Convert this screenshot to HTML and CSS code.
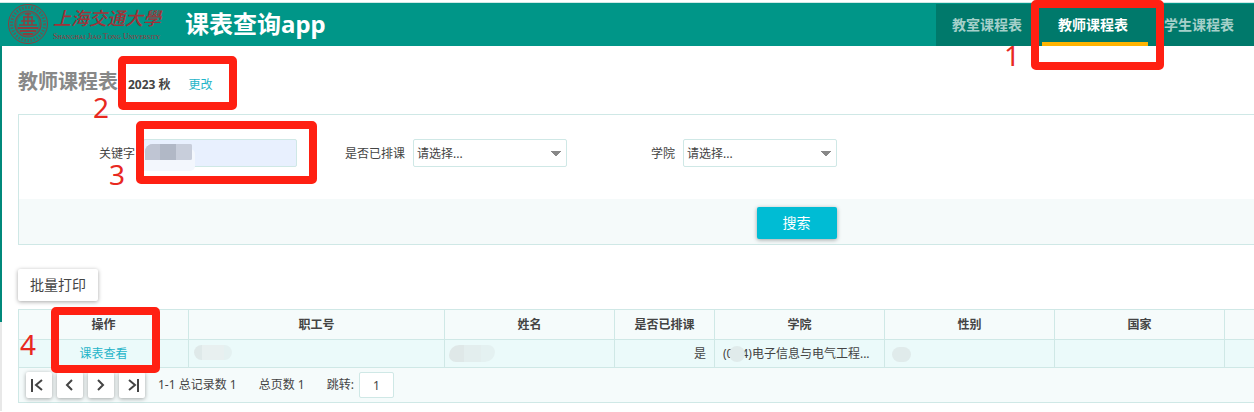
FILE: index.html
```html
<!DOCTYPE html>
<html lang="zh-CN">
<head>
    <meta charset="UTF-8">
    <meta name="viewport" content="width=device-width, initial-scale=1.0">
    <title>课表查询app</title>
    <link rel="stylesheet" href="styles.css">
</head>
<body>
    <header class="header">
        <svg class="emblem" viewBox="0 0 42 42" fill="none" stroke="#8c3f3e">
            <circle cx="21" cy="21" r="19.5" stroke-width="1"/>
            <circle cx="21" cy="21" r="16.5" stroke-width="3" stroke-dasharray="1.5 1.6" opacity=".7"/>
            <circle cx="21" cy="21" r="13" stroke-width="1.2"/>
            <circle cx="21" cy="21" r="11.5" stroke-width=".6"/>
            <path d="M16 14h10M18 11h6M14 18h14M12 22h18M21 10v12M17 14v8M25 14v8" stroke-width="1.5"/>
            <path d="M11 25h20M13 28h16M16 31h10" stroke-width="1.8"/>
        </svg>
        <div class="school">
            <span class="school-cn">上海交通大學</span>
            <span class="school-en">Shanghai Jiao Tong University</span>
        </div>
        <h1>课表查询app</h1>
        <nav>
            <a href="#">教室课程表</a>
            <a href="#" class="active">教师课程表</a>
            <a href="#">学生课程表</a>
        </nav>
    </header>

    <main class="content">
        <div class="title-row">
            <h2>教师课程表</h2>
            <span class="term">2023 秋</span>
            <a href="#">更改</a>
        </div>

        <form class="search">
            <div class="fields">
                <div class="field">
                    <label for="keyword">关键字</label>
                    <div class="input-wrap">
                        <input type="text" id="keyword">
                        <span class="mask mask-keyword"></span>
                    </div>
                </div>
                <div class="field">
                    <label for="arranged">是否已排课</label>
                    <select id="arranged"><option>请选择...</option></select>
                </div>
                <div class="field">
                    <label for="college">学院</label>
                    <select id="college"><option>请选择...</option></select>
                </div>
            </div>
            <div class="search-bar">
                <button type="button" class="primary">搜索</button>
            </div>
        </form>

        <button type="button" class="print">批量打印</button>

        <table>
            <colgroup>
                <col class="col-m"><col class="col-l"><col class="col-m"><col class="col-s">
                <col class="col-m"><col class="col-m"><col class="col-m"><col>
            </colgroup>
            <thead>
                <tr>
                    <th>操作</th>
                    <th>职工号</th>
                    <th>姓名</th>
                    <th>是否已排课</th>
                    <th>学院</th>
                    <th>性别</th>
                    <th>国家</th>
                    <th></th>
                </tr>
            </thead>
            <tbody>
                <tr>
                    <td class="center"><a href="#">课表查看</a></td>
                    <td><span class="mask mask-id"></span></td>
                    <td><span class="mask mask-name"></span></td>
                    <td class="right">是</td>
                    <td>(0<span class="mask mask-code"></span>4)电子信息与电气工程...</td>
                    <td><span class="mask mask-sex"></span></td>
                    <td></td>
                    <td></td>
                </tr>
            </tbody>
        </table>

        <div class="pager">
            <button type="button" aria-label="首页"><svg viewBox="0 0 26 26"><path d="M6 7v13M16 8l-6 5 6 5"/></svg></button>
            <button type="button" aria-label="上一页"><svg viewBox="0 0 26 26"><path d="M15 8l-5 5 5 5"/></svg></button>
            <button type="button" aria-label="下一页"><svg viewBox="0 0 26 26"><path d="M10 8l5 5-5 5"/></svg></button>
            <button type="button" aria-label="末页"><svg viewBox="0 0 26 26"><path d="M10 8l6 5-6 5M19 7v13"/></svg></button>
            <span class="records">1-1 总记录数 1</span>
            <span class="pages">总页数 1</span>
            <label for="jump">跳转:</label>
            <input type="text" id="jump" value="1">
        </div>
    </main>

    <!-- Step marks -->
    <div class="mark mark-tab"></div>
    <div class="mark mark-term"></div>
    <div class="mark mark-keyword"></div>
    <div class="mark mark-view"></div>
    <span class="step step-1">1</span>
    <span class="step step-2">2</span>
    <span class="step step-3">3</span>
    <span class="step step-4">4</span>
</body>
</html>
```
FILE: styles.css
```css
* {
    box-sizing: border-box;
}
body {
    position: relative;
    margin: 0;
    padding-top: 2px;
    font-family: "Noto Sans", "Noto Sans CJK SC", sans-serif;
    font-size: 12px;
    line-height: 18px;
    color: #444;
    background:
        linear-gradient(#00897b, #00897b) 0 0 / 2px 322px no-repeat,
        linear-gradient(#e8e8e8, #e8e8e8) 0 0 / 2px 100% no-repeat,
        #fff;
}
body::before {
    content: "";
    position: absolute;
    top: 0;
    left: 0;
    right: 0;
    height: 2px;
    background: #fff;
    border-bottom: 1px solid #cfe8e6;
}
a {
    color: #1fb5c9;
    text-decoration: none;
}
button, input, select {
    font: inherit;
    color: inherit;
}
button {
    border: none;
    border-radius: 2px;
    background: #fff;
    box-shadow: 0 1px 4px rgba(0, 0, 0, 0.35);
}
.header {
    display: flex;
    align-items: center;
    height: 44px;
    padding-left: 7px;
    background: #009688;
}
.emblem {
    width: 42px;
    height: 42px;
}
.school {
    display: flex;
    flex-direction: column;
    width: 106px;
    margin-left: 4px;
    color: #a03238;
    white-space: nowrap;
}
.school-cn {
    font-family: "Liberation Serif", "Noto Sans CJK SC", serif;
    font-size: 18px;
    font-style: italic;
    font-weight: 500;
    line-height: 26px;
}
.school-en {
    font-family: "Liberation Serif", serif;
    font-size: 8px;
    font-variant: small-caps;
    line-height: 10px;
}
h1 {
    margin: 0 0 0 26px;
    font-size: 24px;
    line-height: 44px;
    color: #fff;
}
nav {
    display: flex;
    align-self: flex-end;
    margin-left: auto;
    background: #00796b;
}
nav a {
    height: 42px;
    padding: 0 20px 0 16px;
    border-bottom: 4px solid transparent;
    font-size: 14px;
    font-weight: bold;
    line-height: 42px;
    color: #a5d0ca;
}
nav a.active {
    border-color: #ffb300;
    color: #fff;
}
.content {
    padding: 20px 0 8px 18px;
}
.title-row {
    display: flex;
    align-items: center;
    height: 32px;
}
h2 {
    margin: 0;
    font-size: 20px;
    color: #888;
}
.term {
    margin: 6px 18px 0 10px;
    font-weight: bold;
}
.title-row a {
    margin-top: 6px;
}
.search {
    margin-top: 16px;
    border: 1px solid #cfe8e6;
    border-right: none;
}
.fields {
    display: flex;
    padding: 24px 0 32px;
}
.field {
    display: flex;
    align-items: center;
    width: 270px;
    padding-left: 8px;
}
.field label {
    flex: 1;
    padding-top: 2px;
    text-align: right;
}
.field:first-child {
    width: 278px;
}
.input-wrap {
    position: relative;
}
.field input, .field select {
    display: block;
    width: 154px;
    height: 28px;
    margin-left: 8px;
    padding: 2px 3px 0;
    border: 1px solid #cfe8e6;
    border-radius: 2px;
    background: #fff;
}
.field input {
    background: #e8f0fe;
}
.field select {
    appearance: none;
    background: conic-gradient(from -45deg at 50% 100%, #888 90deg, transparent 0) right 5px center / 10px 5px no-repeat, #fff;
}
.search-bar {
    display: flex;
    justify-content: center;
    height: 45px;
    padding: 8px 0 0 320px;
    background: #f5fafa;
}
.primary {
    width: 80px;
    height: 32px;
    font-size: 14px;
    color: #fff;
    background: #00bcd4;
}
.print {
    display: block;
    width: 80px;
    height: 32px;
    margin: 24px 0 8px;
    padding: 0;
    font-size: 14px;
}
table {
    width: 100%;
    table-layout: fixed;
    border-collapse: collapse;
    background: #f5fbfb;
}
.col-s {
    width: 100px;
}
.col-m {
    width: 170px;
}
.col-l {
    width: 256px;
}
th, td {
    height: 30px;
    padding: 1px 8px 0;
    border: 1px solid #cfe8e6;
    white-space: nowrap;
}
th:last-child, td:last-child {
    border-right: none;
}
td {
    position: relative;
    height: 28px;
    padding-top: 0;
    background: #ebfafa;
}
.center {
    text-align: center;
}
.right {
    text-align: right;
}
.pager {
    display: flex;
    align-items: center;
    height: 35px;
    padding-left: 7px;
    border: 1px solid #cfe8e6;
    border-width: 0 0 1px 1px;
    background: #f5fbfb;
}
.pager button {
    width: 26px;
    height: 26px;
    margin-right: 5px;
    padding: 0;
}
.pager svg {
    display: block;
    fill: none;
    stroke: #444;
    stroke-width: 2;
}
.records {
    margin: 0 22px 0 8px;
}
.pages {
    margin-right: 22px;
}
.pager input {
    width: 35px;
    height: 26px;
    margin-left: 5px;
    border: 1px solid #cfe8e6;
    border-radius: 2px;
    text-align: center;
}
/* blurred out private values */
.mask {
    position: absolute;
    border-radius: 8px;
    background: #e0ebeb;
}
.mask-keyword {
    top: 5px;
    left: 10px;
    width: 47px;
    height: 16px;
    border-radius: 8px 2px 2px 0;
    background: linear-gradient(90deg, #bfc5d3 15px, #b1b8c6 15px 31px, #c8cedb 31px);
    box-shadow: 0 8px 0 3px #f3f7fd;
}
.mask-keyword::before {
    content: "";
    position: absolute;
    inset: 0;
    border-radius: inherit;
    background: inherit;
}
.mask-id {
    top: 5px;
    left: 5px;
    width: 38px;
    height: 15px;
    background: linear-gradient(90deg, #dfe9e9 8px, #e8f0f0 8px 30px, #e4f1f1 30px);
}
.mask-name {
    top: 5px;
    left: 4px;
    width: 46px;
    height: 17px;
    border-radius: 12px 8px 12px 8px;
    background: linear-gradient(90deg, #dfe8e8 15px, #e3eeee 15px 32px, #e4f1f1 32px);
}
.mask-code {
    display: inline-block;
    position: relative;
    width: 16px;
    height: 16px;
    margin: 0 -4px;
    vertical-align: middle;
}
.mask-sex {
    top: 7px;
    left: 7px;
    width: 19px;
    height: 15px;
}
/* red boxes and numbers over the page */
.mark {
    position: absolute;
    border: 8px solid #ff2012;
    border-radius: 5px;
}
.mark-tab {
    top: 0;
    right: 90px;
    width: 133px;
    height: 70px;
}
.mark-term {
    top: 56px;
    left: 118px;
    width: 119px;
    height: 54px;
}
.mark-keyword {
    top: 121px;
    left: 136px;
    width: 181px;
    height: 63px;
}
.mark-view {
    top: 307px;
    left: 51px;
    width: 109px;
    height: 66px;
}
.step {
    position: absolute;
    font-size: 28px;
    line-height: 32px;
    color: #e8291f;
}
.step-1 {
    top: 39px;
    right: 234px;
}
.step-2 {
    top: 91px;
    left: 93px;
}
.step-3 {
    top: 158px;
    left: 109px;
}
.step-4 {
    top: 328px;
    left: 20px;
}
```
